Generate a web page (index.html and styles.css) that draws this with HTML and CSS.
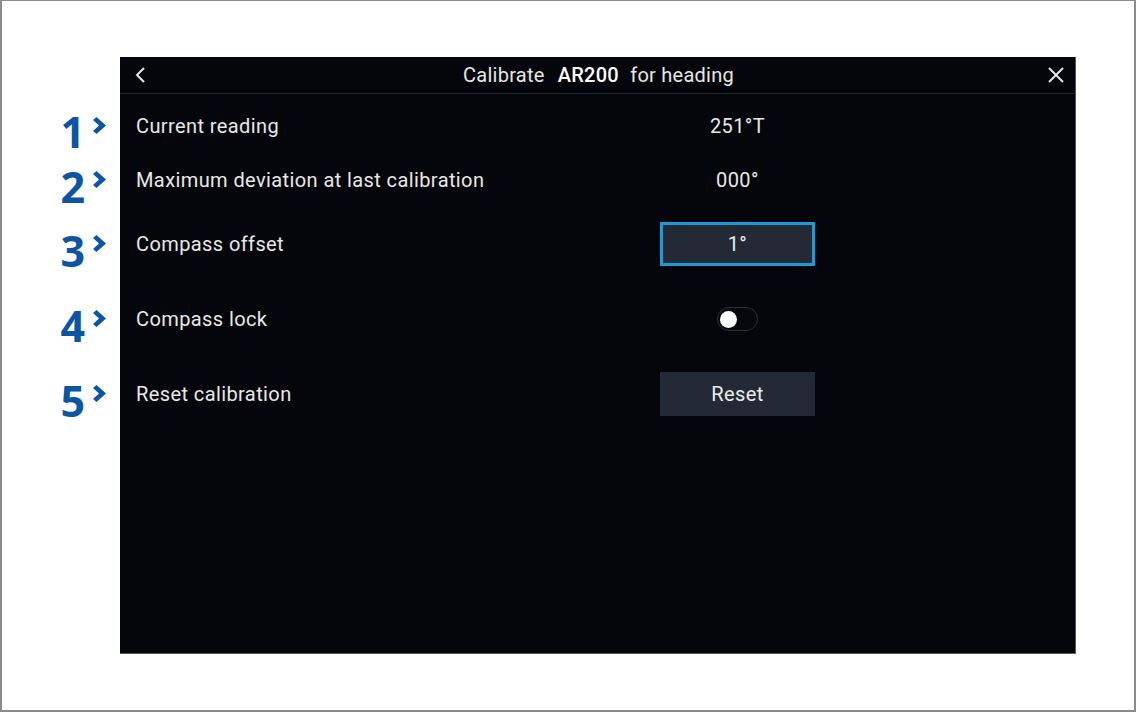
FILE: index.html
```html
<!DOCTYPE html>
<html lang="en">

<head>
    <meta charset="UTF-8">
    <meta name="viewport" content="width=device-width, initial-scale=1.0">
    <title>Calibrate AR200 for heading</title>
    <link rel="stylesheet" href="styles.css">
</head>

<body>
    <div class="frame">
        <div class="layout">
            <div class="mark"></div>
            <div class="screen-header">
                <svg class="icon" width="12" height="16" viewBox="0 0 12 16">
                    <path d="M9 1 L2 8 L9 15" fill="none" stroke="#e6e6e6" stroke-width="2" />
                </svg>
                <div class="title">Calibrate <b>AR200</b> for heading</div>
                <svg class="icon" width="16" height="16" viewBox="0 0 16 16">
                    <path d="M1 1 L15 15 M15 1 L1 15" fill="none" stroke="#e6e6e6" stroke-width="2" />
                </svg>
            </div>

            <div class="mark row-1">
                <span class="num">1</span>
                <svg class="chev" width="14" height="17" viewBox="0 0 14 17"><path d="M0 3 L3.5 0 L13 8.5 L3.5 17 L0 14 L6 8.5 Z" /></svg>
            </div>
            <div class="row row-1">
                <div class="label">Current reading</div>
                <div class="value">251°T</div>
            </div>

            <div class="mark row-2">
                <span class="num">2</span>
                <svg class="chev" width="14" height="17" viewBox="0 0 14 17"><path d="M0 3 L3.5 0 L13 8.5 L3.5 17 L0 14 L6 8.5 Z" /></svg>
            </div>
            <div class="row row-2">
                <div class="label">Maximum deviation at last calibration</div>
                <div class="value">000°</div>
            </div>

            <div class="mark row-3">
                <span class="num">3</span>
                <svg class="chev" width="14" height="17" viewBox="0 0 14 17"><path d="M0 3 L3.5 0 L13 8.5 L3.5 17 L0 14 L6 8.5 Z" /></svg>
            </div>
            <div class="row row-3">
                <div class="label">Compass offset</div>
                <div class="value"><button class="btn focused">1°</button></div>
            </div>

            <div class="mark row-4">
                <span class="num">4</span>
                <svg class="chev" width="14" height="17" viewBox="0 0 14 17"><path d="M0 3 L3.5 0 L13 8.5 L3.5 17 L0 14 L6 8.5 Z" /></svg>
            </div>
            <div class="row row-4">
                <div class="label">Compass lock</div>
                <div class="value"><span class="toggle"><span class="knob"></span></span></div>
            </div>

            <div class="mark row-5">
                <span class="num">5</span>
                <svg class="chev" width="14" height="17" viewBox="0 0 14 17"><path d="M0 3 L3.5 0 L13 8.5 L3.5 17 L0 14 L6 8.5 Z" /></svg>
            </div>
            <div class="row row-5">
                <div class="label">Reset calibration</div>
                <div class="value"><button class="btn">Reset</button></div>
            </div>

            <div class="mark"></div>
            <div class="row filler"></div>
        </div>
    </div>
</body>

</html>
```

FILE: styles.css
```css
* {
    box-sizing: border-box;
}

body {
    margin: 0;
    background: #fff;
    font-family: Roboto, "Liberation Sans", sans-serif;
}

.frame {
    width: 1136px;
    height: 712px;
    border: 2px solid #8a8a8a;
    border-top-width: 1px;
    border-right-width: 2px;
    padding-top: 56px;
}

.layout {
    display: grid;
    grid-template-columns: 118px 956px;
}

.screen-header {
    height: 37px;
    background: #05060b;
    border-bottom: 1px solid #23252b;
    display: flex;
    align-items: center;
    justify-content: space-between;
    padding: 0 11px 0 15px;
    color: #e6e6e6;
    border-right: 1px solid #55575c;
}

.title {
    font-size: 20px;
    letter-spacing: 0.25px;
    margin-left: 2px;
}

.title b {
    font-weight: 500;
    color: #fff;
    margin: 0 6px 0 8px;
}

.icon {
    display: block;
}

.mark {
    display: flex;
    align-items: center;
    justify-content: flex-end;
    padding-right: 13px;
    gap: 8px;
}

.num {
    font-family: "Open Sans", "DejaVu Sans", sans-serif;
    font-weight: 700;
    font-style: normal;
    font-synthesis: none;
    font-size: 43px;
    color: #0b55a2;
    line-height: 1;
    margin-top: 12px;
}

.chev {
    display: block;
    fill: #0b55a2;
    margin-top: -1px;
}

.row {
    background: #05060b;
    display: flex;
    align-items: center;
    color: #e8e8e8;
    font-size: 20px;
    letter-spacing: 0.4px;
    border-right: 1px solid #55575c;
}

.label {
    width: 540px;
    padding-left: 16px;
}

.value {
    width: 155px;
    display: flex;
    justify-content: center;
}

.row-1 { height: 63px; }
.row-2 { height: 46px; }
.row-3 { height: 82px; }
.row-4 { height: 68px; }
.row-5 { height: 82px; }

.filler {
    height: 219px;
    border-bottom: 1px solid #55575c;
}

.btn {
    width: 155px;
    height: 44px;
    background: #232a35;
    border: none;
    color: #ececec;
    font-family: Roboto, "Liberation Sans", sans-serif;
    font-size: 20px;
    letter-spacing: 0.4px;
    padding: 0;
}

.btn.focused {
    border: 3px solid #1b9bd8;
}

.toggle {
    width: 41px;
    height: 24px;
    border-radius: 12px;
    background: #07080c;
    border: 1px solid #2b2e35;
    display: flex;
    align-items: center;
    padding-left: 2px;
}

.knob {
    width: 17px;
    height: 17px;
    border-radius: 50%;
    background: #fff;
}
```
